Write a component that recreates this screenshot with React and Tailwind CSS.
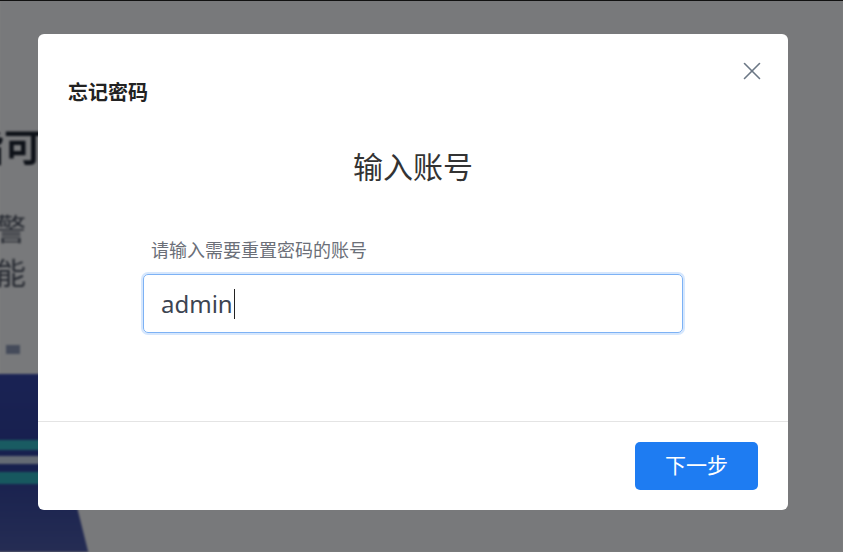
import React from 'react';

const cjk = { fontFamily: '"Noto Sans", "Noto Sans CJK SC", sans-serif' };

function Backdrop() {
  // the blurred login page that lies under the mask
  return (
    <div className="absolute inset-0 bg-[#f0f2f6] blur-[1px]">
      <div className="flex h-full">
        <div className="flex w-[200px] flex-col pt-[122px] -ml-[34px]">
          <p className="text-[38px] font-bold leading-[48px] text-[#1c2330]">指可</p>
          <p className="mt-[39px] text-[30px] leading-[40px] text-[#4a5160]">报警</p>
          <p className="mt-[4px] text-[30px] leading-[40px] text-[#4a5160]">智能</p>
          <div className="mt-[52px] ml-[40px] h-[10px] w-[14px] bg-[#8a97b5]" />
          <div className="mt-[20px] ml-[10px] h-[190px] w-[90px] bg-gradient-to-b from-[#3446a8] via-[#2e3f9c] to-[#4b5aa8] skew-x-[14deg]">
            <div className="mt-[66px] h-[10px] bg-[#33b6c4]" />
            <div className="mt-[6px] h-[8px] bg-[#c9d4e8]" />
            <div className="mt-[8px] h-[12px] bg-[#2fb1bf]" />
          </div>
        </div>
        <div className="flex-1" />
      </div>
    </div>
  );
}

export default function App() {
  return (
    <div className="relative h-[552px] w-full overflow-hidden" style={cjk}>
      <Backdrop />
      <div className="absolute inset-0 bg-[#000000]/50 border-t border-[#111]" />

      <div className="relative ml-[38px] pt-[34px]">
        <div className="relative flex h-[476px] w-[750px] flex-col rounded-[6px] bg-white">
          <button className="absolute right-[26px] top-[27px] text-[#6b7785]">
            <svg width="20" height="20" viewBox="0 0 20 20" fill="none" stroke="currentColor" strokeWidth="1.6" strokeLinecap="round">
              <line x1="2.5" y1="2.5" x2="17.5" y2="17.5" />
              <line x1="17.5" y1="2.5" x2="2.5" y2="17.5" />
            </svg>
          </button>

          <div className="px-[30px] pt-[45px]">
            <h2 className="text-[20px] font-bold leading-[28px] text-[#222]">忘记密码</h2>
          </div>

          <div className="flex flex-1 flex-col">
            <h1 className="mt-[40px] text-center text-[30px] leading-[40px] text-[#333]">输入账号</h1>
            <div className="mx-auto mt-[51px] w-[540px]">
              <p className="pl-[8px] text-[18px] leading-[24px] text-[#6b6f78]">请输入需要重置密码的账号</p>
              <div className="mt-[12px] flex h-[59px] items-center rounded-[5px] border border-[#7db2f5] px-[17px] ring-2 ring-[#d6e7fd]">
                <span className="text-[24px] text-[#3c4451]">admin</span>
                <span className="ml-[1px] h-[30px] w-px bg-[#222]" />
              </div>
            </div>
          </div>

          <div className="flex justify-end border-t border-[#e4e4e4] px-[30px] pt-[20px] pb-[20px]">
            <button className="h-[48px] w-[123px] rounded-[5px] bg-[#1e7cf2] text-[21px] text-white">下一步</button>
          </div>
        </div>
      </div>
    </div>
  );
}
